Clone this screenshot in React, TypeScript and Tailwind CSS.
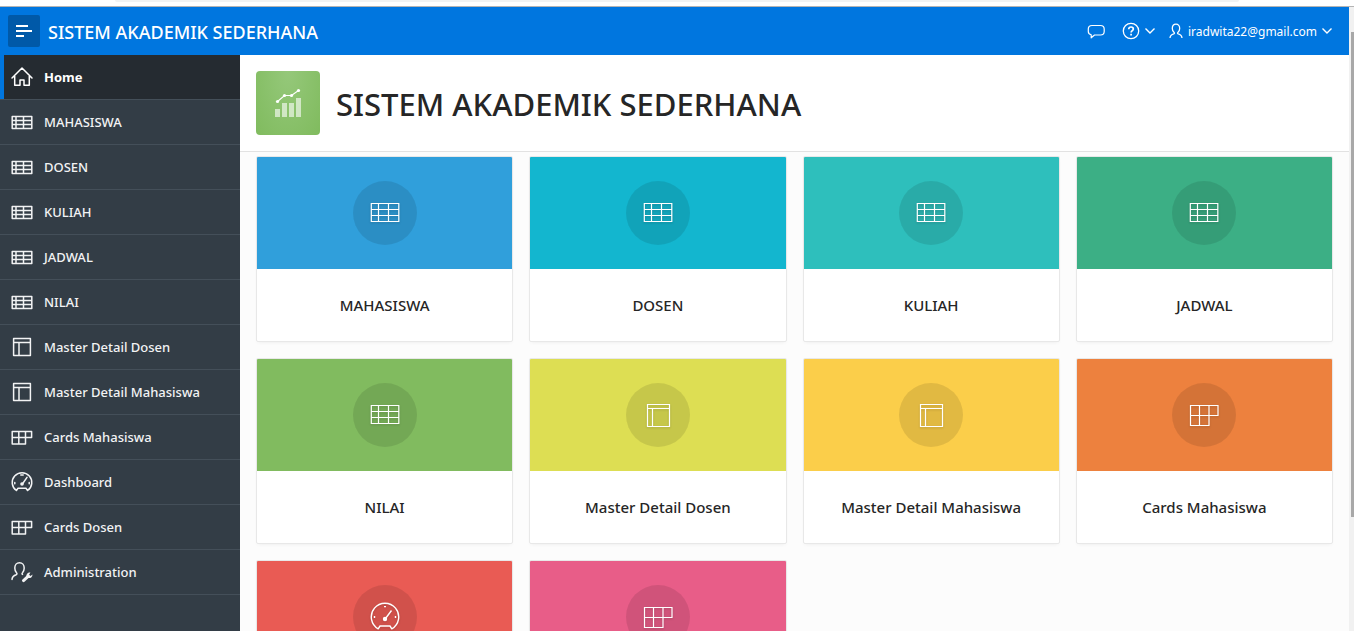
import React from "react";

type IconKind = "home" | "table" | "layout" | "cards" | "gauge" | "admin";

function SmallIcon({ kind }: { kind: IconKind }) {
  return (
    <svg
      viewBox="0 0 24 24"
      className="size-6 shrink-0"
      fill="none"
      stroke="currentColor"
      strokeWidth="1.5"
      aria-hidden="true"
    >
      {kind === "home" && (
        <path d="M2 13 12 3l10 10M4.700 11v9.300H10v-5.400h4v5.400h5.300V11" strokeLinejoin="round" strokeLinecap="round" />
      )}
      {kind === "table" && (
        <path d="M2.200 6.500h19.600v12H2.200zM2.200 10.500h19.600M2.200 14.500h19.600M6 6.500v12M13.500 6.500v12" strokeLinejoin="round" />
      )}
      {kind === "layout" && <path d="M3.600 3.600h16.800v16.800H3.600zM3.600 7.500h16.800M9 7.500v12.900" strokeLinejoin="round" />}
      {kind === "cards" && (
        <path d="M2.200 6.500h19.400v6H15.500v6.500H2.200zM2.200 12.500h13.300M8.800 6.500V19M15.500 6.500v6" strokeLinejoin="round" />
      )}
      {kind === "gauge" && (
        <>
          <path d="M6.400 20.500A9.800 9.800 0 1 1 17.600 20.500L16 18.300H8z" strokeLinejoin="round" />
          <path d="M12.400 14 17 7.400M10.800 5h2.400M4.800 12.400v1.400M19.200 12.400v1.400" strokeLinecap="round" />
          <circle cx="12" cy="14" r="1.800" fill="currentColor" stroke="none" />
        </>
      )}
      {kind === "admin" && (
        <>
          <path
            d="M2 19.400c.2-2.700 1.600-3.900 4.200-4.700.9-.3 1-1.200.3-1.900C5.400 11.600 4.800 10 4.800 8c0-3 1.900-5.200 4.700-5.200s4.700 2.200 4.700 5.200c0 2-.6 3.600-1.700 4.800-.6.600-.6 1.200 0 1.600"
            strokeLinecap="round"
          />
          <path d="M13.500 20.600 17.800 16.600" strokeWidth="3" strokeLinecap="round" />
          <path d="M20.400 12.600c-2.500-.3-4.600 1.900-3.800 4.300 1.800 2.300 6 1.200 5.900-2.500l-2 1.500-1.400-1.200z" fill="currentColor" stroke="none" />
        </>
      )}
    </svg>
  );
}

function LargeIcon({ kind }: { kind: IconKind }) {
  return (
    <svg
      viewBox="0 0 32 32"
      className="size-8 drop-shadow-[0_1px_1px_rgba(0,0,0,0.15)]"
      fill="none"
      stroke="#fff"
      strokeWidth="1.2"
      aria-hidden="true"
    >
      {kind === "table" && <path d="M2.300 6.500h27.500v18H2.300zM2.300 12.500h27.500M2.300 18.500h27.500M9.500 6.500v18M19.500 6.500v18" />}
      {kind === "layout" && <path d="M5.500 5.500h22v22h-22zM5.500 9.500h22M10.500 9.500v18" />}
      {kind === "cards" && <path d="M2.500 6.500h27.500v10h-9v10H2.500zM2.500 16.500H21M11.500 6.500v20M21 6.500v10" />}
      {kind === "gauge" && (
        <>
          <path d="M9.200 27.800A13.700 13.700 0 1 1 22.800 27.800L21 25H11z" strokeWidth="1.400" strokeLinejoin="round" />
          <path d="M16.500 17.500 22.500 9.500M15 5.600h2M5.500 15v2M26.500 15v2" strokeWidth="1.400" />
          <circle cx="16" cy="18" r="2.200" fill="#fff" stroke="none" />
        </>
      )}
    </svg>
  );
}

function Chevron() {
  return (
    <svg viewBox="0 0 12 12" className="size-3" fill="none" stroke="currentColor" strokeWidth="1.400" aria-hidden="true">
      <path d="M1.500 3.500 6 8l4.500-4.500" />
    </svg>
  );
}

const navItems: { label: string; icon: IconKind }[] = [
  { label: "Home", icon: "home" },
  { label: "MAHASISWA", icon: "table" },
  { label: "DOSEN", icon: "table" },
  { label: "KULIAH", icon: "table" },
  { label: "JADWAL", icon: "table" },
  { label: "NILAI", icon: "table" },
  { label: "Master Detail Dosen", icon: "layout" },
  { label: "Master Detail Mahasiswa", icon: "layout" },
  { label: "Cards Mahasiswa", icon: "cards" },
  { label: "Dashboard", icon: "gauge" },
  { label: "Cards Dosen", icon: "cards" },
  { label: "Administration", icon: "admin" },
];

const cards: { label: string; icon: IconKind; color: string }[] = [
  { label: "MAHASISWA", icon: "table", color: "bg-[#309fdb]" },
  { label: "DOSEN", icon: "table", color: "bg-[#13b6cf]" },
  { label: "KULIAH", icon: "table", color: "bg-[#2ebfbc]" },
  { label: "JADWAL", icon: "table", color: "bg-[#3caf85]" },
  { label: "NILAI", icon: "table", color: "bg-[#81bb5f]" },
  { label: "Master Detail Dosen", icon: "layout", color: "bg-[#ddde53]" },
  { label: "Master Detail Mahasiswa", icon: "layout", color: "bg-[#fbce4a]" },
  { label: "Cards Mahasiswa", icon: "cards", color: "bg-[#ed813e]" },
  { label: "Dashboard", icon: "gauge", color: "bg-[#e95b54]" },
  { label: "Cards Dosen", icon: "cards", color: "bg-[#e85d88]" },
];

function TopBar() {
  return (
    <header className="flex h-12 shrink-0 items-center bg-[#0076df] pr-4 pl-2 text-white">
      <button type="button" aria-label="Toggle navigation" className="flex size-8 items-center justify-center rounded-xs bg-[#0059a8]">
        <svg viewBox="0 0 16 16" className="size-4" fill="none" stroke="currentColor" strokeWidth="2" aria-hidden="true">
          <path d="M0 3h12M0 8h16M0 13h8" />
        </svg>
      </button>
      <a href="#home" className="ml-2 pt-0.5 text-lg font-medium">SISTEM AKADEMIK SEDERHANA</a>
      <div className="ml-auto flex items-center">
        <button type="button" aria-label="Feedback" className="mr-4">
          <svg viewBox="0 0 20 20" className="size-5" fill="none" stroke="currentColor" strokeWidth="1.200" aria-hidden="true">
            <path d="M6 4.500h8.500c2.300 0 3.700 1.600 3.700 3.500v2.500c0 1.900-1.400 3.500-3.700 3.500H8.500L5.200 16.800v-3C3.400 13.400 2.300 12.200 2.300 10.500V8c0-1.900 1.400-3.500 3.700-3.500z" strokeLinejoin="round" />
          </svg>
        </button>
        <button type="button" aria-label="Help" className="mr-3 flex items-center gap-1">
          <svg viewBox="0 0 18 18" className="size-[18px]" fill="none" stroke="currentColor" aria-hidden="true">
            <circle cx="9" cy="9" r="7.700" strokeWidth="1.300" />
            <path d="M6.700 7.200C6.800 5.800 7.700 5 9 5s2.300.8 2.300 2c0 1.600-2.200 1.700-2.200 3.500M9.100 11.800v1.600" strokeWidth="1.700" />
          </svg>
          <Chevron />
        </button>
        <button type="button" className="flex items-center gap-1 text-xs">
          <svg viewBox="0 0 16 16" className="size-4" fill="none" stroke="currentColor" strokeWidth="1.300" aria-hidden="true">
            <path d="M2 15c.2-2.500 1.500-3.600 3.800-4.200.8-.3.8-1 .2-1.500C4.900 8.300 4.300 7.100 4.300 5.600 4.300 3 5.800 1.200 8 1.200s3.700 1.800 3.700 4.400c0 1.500-.6 2.700-1.700 3.700-.6.500-.6 1.200.2 1.500 2.300.6 3.600 1.700 3.800 4.200" />
          </svg>
          <span className="pt-0.5">iradwita22@gmail.com</span>
          <Chevron />
        </button>
      </div>
    </header>
  );
}

function Sidebar() {
  return (
    <nav className="w-60 shrink-0 bg-[#333d46] text-[#f2f3f4]">
      <ul>
        {navItems.map((item, i) => (
          <li key={item.label} className="border-b border-[#444f59]">
            <a
              href="#"
              className={
                i === 0
                  ? "flex h-11 items-center gap-2.5 border-l-4 border-[#0076df] bg-[#252b31] pl-1.5 text-[13px] font-bold text-white"
                  : "flex h-11 items-center gap-2.5 pl-2.5 text-[13px] font-medium"
              }
            >
              <SmallIcon kind={item.icon} />
              <span className="pt-0.5">{item.label}</span>
            </a>
          </li>
        ))}
      </ul>
    </nav>
  );
}

function AppLogo() {
  return (
    <div className="flex size-16 shrink-0 items-center justify-center rounded-sm bg-radial-[at_50%_0%] from-[#95c87a] to-[#80bb5e]">
      <svg viewBox="0 0 32 32" className="size-8" aria-hidden="true">
        <path d="M3 22h5v8H3zM10 16h5v14h-5zM17 16h5v14h-5zM24 11h5v19h-5z" fill="#fff" fillOpacity=".6" />
        <path d="M5.500 14.500 12.500 8.500h7L26.500 3.500" fill="none" stroke="#fff" strokeWidth="1.100" />
        <g fill="#fff">
          <circle cx="5.500" cy="14.500" r="1.600" />
          <circle cx="12.500" cy="8.500" r="1.600" />
          <circle cx="19.500" cy="8.500" r="1.600" />
          <circle cx="26.500" cy="3.500" r="1.600" />
        </g>
      </svg>
    </div>
  );
}

export default function App() {
  return (
    <div className="flex h-screen flex-col overflow-hidden bg-white font-['Noto_Sans','Open_Sans',sans-serif] text-[#262626]">
      <div className="flex h-[7px] shrink-0 flex-col border-b border-[#b4b4b4] px-[115px]">
        <div className="h-0.5 rounded-b-full bg-[#f1f3f4]" />
      </div>
      <div className="flex min-h-0 flex-1">
        <div className="flex min-w-0 flex-1 flex-col">
          <TopBar />
          <div className="flex min-h-0 flex-1">
            <Sidebar />
            <main className="min-w-0 flex-1 overflow-hidden bg-[#fcfcfc]">
              <div className="flex items-center gap-4 border-b border-[#e2e2e2] bg-white p-4">
                <AppLogo />
                <h1 className="pt-0.5 text-[31px] font-medium">SISTEM AKADEMIK SEDERHANA</h1>
              </div>
              <ul className="grid grid-cols-4 gap-4 px-4 pt-1">
                {cards.map((card) => (
                  <li key={card.label}>
                    <a href="#" className="block overflow-hidden rounded-xs border border-[#e8e8e8] bg-white shadow-[0_2px_4px_-2px_rgba(0,0,0,0.08)]">
                      <div className={`flex h-28 items-center justify-center ${card.color}`}>
                        <div className="flex size-16 items-center justify-center rounded-full bg-black/10">
                          <LargeIcon kind={card.icon} />
                        </div>
                      </div>
                      <h2 className="px-4 py-6 text-center text-[15px] leading-6 font-medium">{card.label}</h2>
                    </a>
                  </li>
                ))}
              </ul>
            </main>
          </div>
        </div>
        <div className="w-[5px] shrink-0 bg-[#f1f1f1] pt-[25px] pl-0.5" aria-hidden="true">
          <div className="h-[81%] bg-[#a8a8a8]" />
        </div>
      </div>
    </div>
  );
}
